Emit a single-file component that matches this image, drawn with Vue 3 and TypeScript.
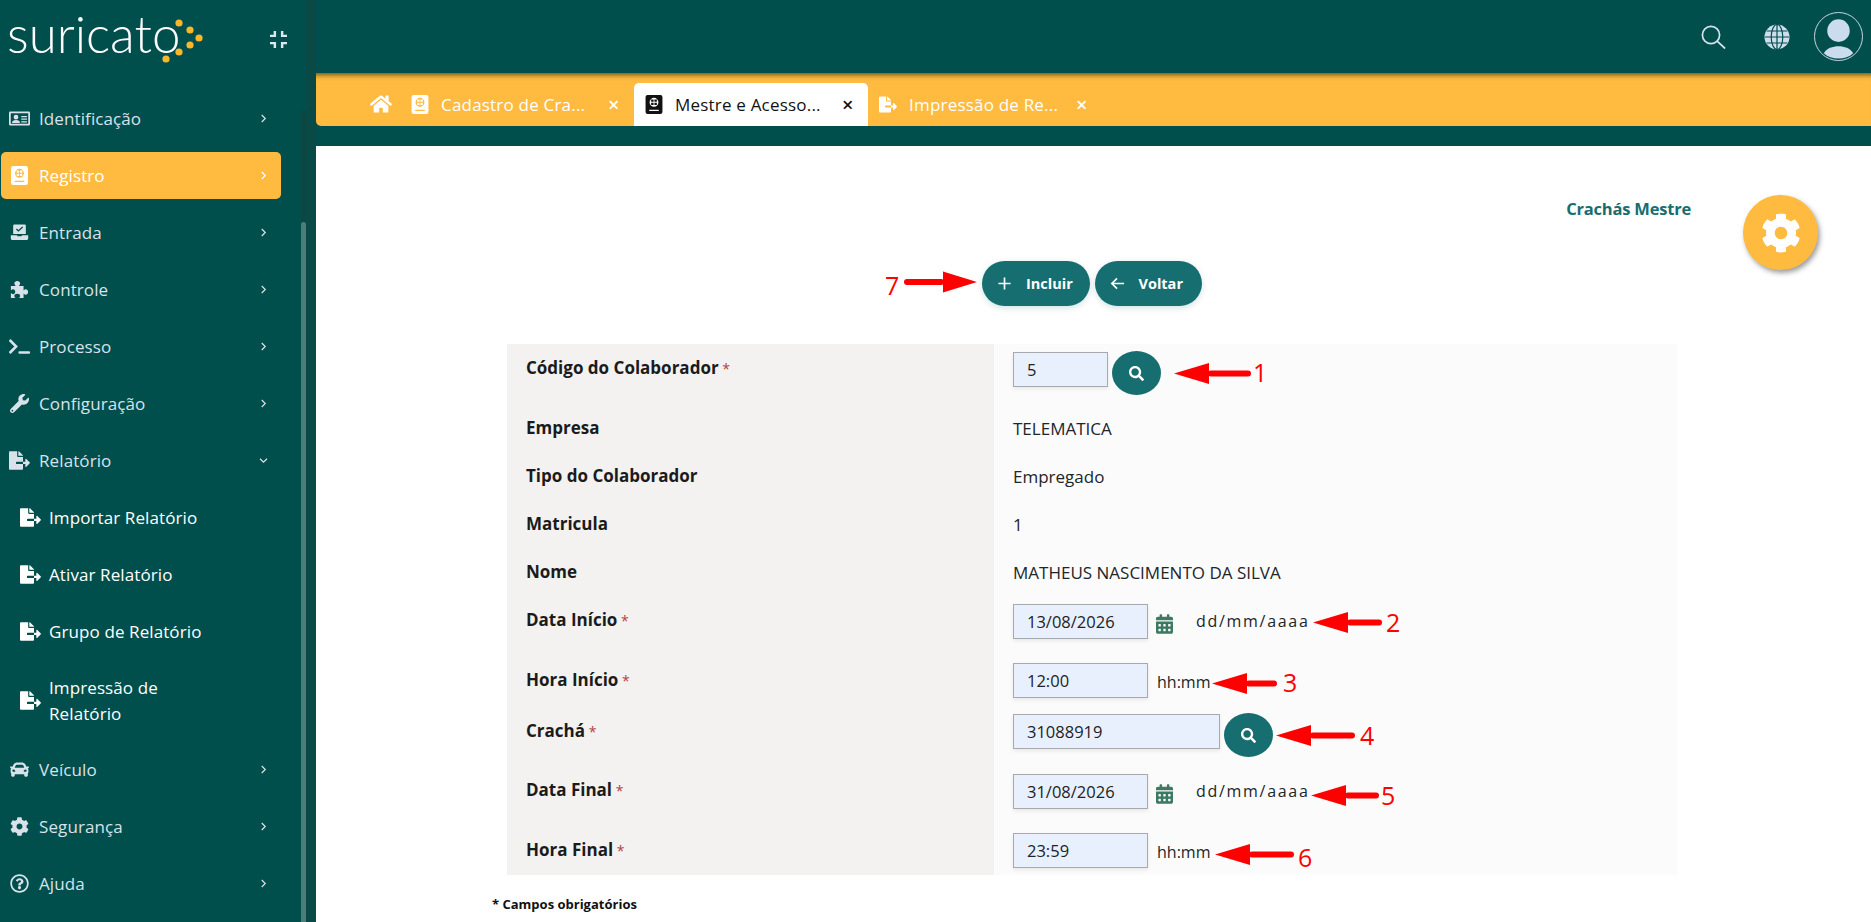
<template>
  <div class="app">
    <aside class="sidebar">
      <div class="brand">
        <div class="logo">
          <span class="logo-text">suricato</span>
          <svg class="logo-dots" viewBox="0 0 50 50" width="50" height="50">
            <circle v-for="(d, i) in logoDots" :key="i" :cx="d[0]" :cy="d[1]" r="3.6" fill="#fbb62c" />
          </svg>
        </div>
        <svg class="collapse" viewBox="5 5 14 14" width="17" height="17" fill="#dfe7ee">
          <path d="M5 16h3v3h2v-5H5v2zm3-8H5v2h5V5H8v3zm6 11h2v-3h3v-2h-5v5zm2-11V5h-2v5h5V8h-3z" />
        </svg>
      </div>
      <nav class="menu">
        <template v-for="item in menu" :key="item.label">
          <a class="menu-item" :class="{ active: item.active, sub: item.sub, tall: item.tall }">
            <span class="menu-icon">
              <svg :viewBox="icons[item.icon].box"><path fill-rule="evenodd" :d="icons[item.icon].d" /></svg>
            </span>
            <span class="menu-label">{{ item.label }}</span>
            <svg v-if="!item.sub" class="chev" :class="{ open: item.open }" viewBox="0 0 8 12" width="7" height="11">
              <path d="M2 2l4 4-4 4" fill="none" stroke="currentColor" stroke-width="1.4" />
            </svg>
          </a>
        </template>
      </nav>
      <div class="scroll-track"><div class="scroll-thumb"></div></div>
    </aside>

    <main class="main">
      <header class="topbar">
        <svg class="top-search" viewBox="0 0 26 26" width="26" height="26" fill="none" stroke="#d6e2ee" stroke-width="1.7">
          <circle cx="11" cy="11" r="8.6" />
          <path d="M17.4 17.4l7.2 6.6" stroke-linecap="round" />
        </svg>
        <svg class="top-globe" viewBox="0 0 26 26" width="26" height="26">
          <circle cx="13" cy="13" r="12.5" fill="#cfdeed" />
          <g fill="none" stroke="#004f4c" stroke-width="1.2">
            <ellipse cx="13" cy="13" rx="5.8" ry="12.5" />
            <path d="M13 .5v25M1 13h24M2.6 7h20.8M2.6 19h20.8" />
          </g>
        </svg>
        <div class="avatar">
          <svg viewBox="0 0 48 48" width="47" height="47">
            <circle cx="24" cy="18" r="11.5" fill="#cbdcee" />
            <path d="M9 41c3-5 9-7 15-7s12 2 15 7c-4 3.800-9 5.500-15 5.500S13 44.800 9 41z" fill="#cbdcee" />
          </svg>
        </div>
      </header>

      <div class="tabbar">
        <svg class="tab-home" :viewBox="icons.home.box" width="22" height="20"><path :d="icons.home.d" /></svg>
        <div v-for="t in tabs" :key="t.label" class="tab" :class="{ current: t.current }">
          <svg class="tab-icon" :viewBox="icons[t.icon].box"><path fill-rule="evenodd" :d="icons[t.icon].d" /></svg>
          <span class="tab-label">{{ t.label }}</span>
          <span class="tab-close">×</span>
        </div>
      </div>
      <div class="strip"></div>

      <section class="content">
        <div class="page-title">Crachás Mestre</div>
        <button class="fab" type="button">
          <svg :viewBox="icons.cog.box" width="40" height="40"><path :d="icons.cog.d" /></svg>
        </button>

        <div class="actions">
          <button class="pill" type="button">
            <svg viewBox="0 0 16 16" width="15" height="15" fill="none" stroke="#fff" stroke-width="1.8"><path d="M8 1.500v13M1.500 8h13" /></svg>
            Incluir
          </button>
          <button class="pill" type="button">
            <svg viewBox="0 0 16 16" width="15" height="15" fill="none" stroke="#fff" stroke-width="1.8"><path d="M15 8H2M7.500 2.500L2 8l5.500 5.500" /></svg>
            Voltar
          </button>
        </div>

        <div class="form">
          <template v-for="r in rows" :key="r.label">
            <div class="cell-label" :class="{ low: r.low }">{{ r.label }}<span v-if="r.req" class="req"> *</span></div>
            <div class="cell-value">
              <span v-if="r.text" class="value-text">{{ r.text }}</span>
              <template v-else>
                <input class="field" :class="r.size" :value="r.value" readonly />
                <button v-if="r.search" class="round" type="button">
                  <svg :viewBox="icons.search.box" width="15" height="15"><path :d="icons.search.d" /></svg>
                </button>
                <svg v-if="r.calendar" class="cal" :viewBox="icons.calendar.box" width="17" height="20"><path :d="icons.calendar.d" /></svg>
                <span v-if="r.calendar" class="hint-date">dd/mm/aaaa</span>
                <span v-if="r.time" class="hint-time">hh:mm</span>
              </template>
            </div>
          </template>
        </div>
        <div class="footnote">* Campos obrigatórios</div>
      </section>
    </main>

    <!-- setas de anotação por cima do print -->
    <svg class="notes" width="1871" height="922" viewBox="0 0 1871 922">
      <g v-for="n in notes" :key="n.label">
        <path :d="arrowPath(n)" fill="#ff0000" />
        <path :d="shaftPath(n)" stroke="#ff0000" stroke-width="6" stroke-linecap="round" fill="none" />
        <text :x="n.tx" :y="n.ty" class="note-num">{{ n.label }}</text>
      </g>
    </svg>
  </div>
</template>

<script setup lang="ts">
interface Note {
  label: string
  tip: number
  base: number
  end: number
  y: number
  tx: number
  ty: number
}

const logoDots = [[9, 9], [20, 16], [29, 24], [20, 31], [9, 38], [-4, 45]]

const fileExport = 'M384 121.9c0-6.3-2.5-12.4-7-16.9L279.1 7c-4.5-4.5-10.6-7-17-7H256v128h128zM571 308l-95.7-96.4c-10.1-10.1-27.4-3-27.4 11.3V288h-64v64h64v65.2c0 14.3 17.3 21.4 27.4 11.3L571 332c6.6-6.6 6.6-17.4 0-24zm-379 28v-32c0-8.8 7.2-16 16-16h176V160H248c-13.2 0-24-10.8-24-24V0H24C10.7 0 0 10.7 0 24v464c0 13.3 10.7 24 24 24h336c13.3 0 24-10.7 24-24V352H208c-8.8 0-16-7.2-16-16z'

const icons: Record<string, { box: string; d: string }> = {
  card: { box: '0 0 24 18', d: 'M1.500 1h21A1.500 1.500 0 0 1 24 2.500v13a1.500 1.500 0 0 1-1.500 1.500h-21A1.500 1.500 0 0 1 0 15.500v-13A1.500 1.500 0 0 1 1.500 1zM2 3v12h20V3zM8 4.800a2.700 2.700 0 1 1 0 5.400 2.700 2.700 0 0 1 0-5.400zM3.500 14c0-2 1.800-3.200 4.500-3.200s4.500 1.200 4.500 3.200zM14 6h6.500v1.500H14zM14 9h6.500v1.500H14zM14 12h6.500v1.500H14z' },
  passport: { box: '0 0 16 18', d: 'M2 0h12a2 2 0 0 1 2 2v14a2 2 0 0 1-2 2H2a2 2 0 0 1-2-2V2a2 2 0 0 1 2-2zM8 2.700a4.200 4.200 0 1 0 0 8.400 4.200 4.200 0 0 0 0-8.400zM5.300 4.300h2.300v2.200H5.300zM8.400 4.300h2.300v2.200H8.400zM5.300 7.300h2.300v2.200H5.300zM8.400 7.300h2.300v2.200H8.400zM3.500 14h9v1.100h-9z' },
  laptop: { box: '0 0 24 24', d: 'M5.500 2h13A1.500 1.500 0 0 1 20 3.500V14H4V3.500A1.500 1.500 0 0 1 5.500 2zM10.600 11.200l6-5.400-1.200-1.300-4.700 4.300-2-1.900-1.200 1.300zM1.500 15.500h7.300l.7 1.200h5l.7-1.200h7.300c.3 0 .5.200.5.500v3.500c0 1-1 2-2 2h-18c-1 0-2-1-2-2V16c0-.3.200-.5.500-.5z' },
  puzzle: { box: '0 0 21 21', d: 'M1 6.500h5.200c-.9-.9-1.400-1.700-1.400-2.800C4.800 2 6.200 1 8 1s3.200 1 3.200 2.700c0 1.100-.5 1.900-1.400 2.800H15v5c.9-.9 1.600-1.300 2.300-1.300 1.600 0 2.700 1.300 2.700 3s-1.100 3-2.700 3c-.7 0-1.400-.4-2.300-1.300V20H10c.8-.8 1.200-1.500 1.200-2.400 0-1.400-1.300-2.400-3.200-2.400s-3.200 1-3.200 2.400c0 .9.4 1.600 1.200 2.400H1v-5.500c.8.8 1.500 1.200 2.300 1.200 1.500 0 2.500-1.200 2.500-2.700s-1-2.700-2.500-2.700c-.8 0-1.500.4-2.300 1.200z' },
  terminal: { box: '0 0 640 512', d: 'M257.981 272.971L63.638 467.314c-9.373 9.373-24.569 9.373-33.941 0L7.029 444.647c-9.357-9.357-9.375-24.522-.04-33.901L161.011 256 6.99 101.255c-9.335-9.379-9.317-24.544.04-33.901l22.667-22.667c9.373-9.373 24.569-9.373 33.941 0L257.981 239.03c9.373 9.372 9.373 24.568 0 33.941zM640 456v-32c0-13.255-10.745-24-24-24H312c-13.255 0-24 10.745-24 24v32c0 13.255 10.745 24 24 24h304c13.255 0 24-10.745 24-24z' },
  wrench: { box: '0 0 512 512', d: 'M507.73 109.1c-2.24-9.03-13.54-12.09-20.12-5.51l-74.36 74.36-67.88-11.31-11.31-67.88 74.36-74.36c6.62-6.62 3.43-17.9-5.66-20.16-47.38-11.74-99.55.91-136.58 37.93-39.64 39.64-50.55 97.1-34.05 147.2L18.74 402.76c-24.99 24.99-24.99 65.51 0 90.5 24.99 24.99 65.51 24.99 90.5 0l213.21-213.21c50.12 16.71 107.47 5.68 147.37-34.22 37.07-37.07 49.7-89.32 37.91-136.73zM64 472c-13.25 0-24-10.75-24-24 0-13.26 10.75-24 24-24s24 10.74 24 24c0 13.25-10.75 24-24 24z' },
  file: { box: '0 0 576 512', d: fileExport },
  car: { box: '0 0 512 512', d: 'M499.99 176h-59.87l-16.64-41.6C406.38 91.63 365.57 64 319.5 64h-127c-46.06 0-86.88 27.63-103.99 70.4L71.87 176H12.01C4.2 176-1.53 183.34.37 190.91l6 24C7.7 220.25 12.5 224 18.01 224h20.07C24.65 235.73 16 252.78 16 272v48c0 16.12 6.16 30.67 16 41.93V416c0 17.67 14.33 32 32 32h32c17.67 0 32-14.33 32-32v-32h256v32c0 17.67 14.33 32 32 32h32c17.67 0 32-14.33 32-32v-54.07c9.84-11.25 16-25.8 16-41.93v-48c0-19.22-8.65-36.27-22.07-48H494c5.51 0 10.31-3.75 11.64-9.09l6-24c1.89-7.57-3.84-14.91-11.65-14.91zm-352.06-17.83c7.29-18.22 24.94-30.17 44.57-30.17h127c19.63 0 37.28 11.95 44.57 30.17L384 208H128l19.93-49.83zM96 319.8c-19.2 0-32-12.76-32-31.9S76.8 256 96 256s48 28.71 48 47.85-28.8 15.95-48 15.95zm320 0c-19.2 0-48 3.19-48-15.95S396.8 256 416 256s32 12.76 32 31.9-12.8 31.9-32 31.9z' },
  cog: { box: '0 0 512 512', d: 'M487.4 315.7l-42.6-24.6c4.3-23.2 4.3-47 0-70.2l42.6-24.6c4.9-2.8 7.1-8.6 5.5-14-11.1-35.6-30-67.8-54.7-94.6-3.8-4.1-10-5.1-14.8-2.3L380.8 110c-17.9-15.4-38.5-27.3-60.8-35.1V25.8c0-5.6-3.9-10.5-9.4-11.7-36.7-8.2-74.3-7.8-109.2 0-5.5 1.2-9.4 6.1-9.4 11.7V75c-22.2 7.9-42.8 19.8-60.8 35.1L88.7 85.5c-4.9-2.8-11-1.9-14.8 2.3-24.7 26.7-43.6 58.9-54.7 94.6-1.7 5.4.6 11.2 5.5 14L67.3 221c-4.3 23.2-4.3 47 0 70.2l-42.6 24.6c-4.9 2.8-7.1 8.6-5.5 14 11.1 35.6 30 67.8 54.7 94.6 3.8 4.1 10 5.1 14.8 2.3l42.6-24.6c17.9 15.4 38.5 27.3 60.8 35.1v49.2c0 5.6 3.9 10.5 9.4 11.7 36.7 8.2 74.3 7.8 109.2 0 5.5-1.2 9.4-6.1 9.4-11.7v-49.2c22.2-7.9 42.8-19.8 60.8-35.1l42.6 24.6c4.9 2.8 11 1.9 14.8-2.3 24.7-26.7 43.6-58.9 54.7-94.6 1.5-5.5-.7-11.3-5.6-14.1zM256 336c-44.1 0-80-35.9-80-80s35.9-80 80-80 80 35.9 80 80-35.9 80-80 80z' },
  help: { box: '0 0 512 512', d: 'M256 8C119.043 8 8 119.083 8 256c0 136.997 111.043 248 248 248s248-111.003 248-248C504 119.083 392.957 8 256 8zm0 448c-110.532 0-200-89.431-200-200 0-110.495 89.472-200 200-200 110.491 0 200 89.471 200 200 0 110.53-89.431 200-200 200zm107.244-255.2c0 67.052-72.421 68.084-72.421 92.863V300c0 6.627-5.373 12-12 12h-45.647c-6.627 0-12-5.373-12-12v-8.659c0-35.745 27.1-50.034 47.579-61.516 17.561-9.845 28.324-16.541 28.324-29.579 0-17.246-21.999-28.693-39.784-28.693-23.189 0-33.894 10.977-48.942 29.969-4.057 5.12-11.46 6.071-16.666 2.124l-27.824-21.098c-5.107-3.872-6.251-11.066-2.644-16.363C184.846 131.491 214.94 112 261.794 112c49.071 0 101.45 38.304 101.45 88.8zM298 368c0 23.159-18.841 42-42 42s-42-18.841-42-42 18.841-42 42-42 42 18.841 42 42z' },
  home: { box: '0 0 576 512', d: 'M280.37 148.26L96 300.11V464a16 16 0 0 0 16 16l112.06-.29a16 16 0 0 0 15.92-16V368a16 16 0 0 1 16-16h64a16 16 0 0 1 16 16v95.64a16 16 0 0 0 16 16.05L464 480a16 16 0 0 0 16-16V300L295.67 148.26a12.19 12.19 0 0 0-15.3 0zM571.6 251.47L488 182.56V44.05a12 12 0 0 0-12-12h-56a12 12 0 0 0-12 12v72.61L318.47 43a48 48 0 0 0-61 0L4.34 251.47a12 12 0 0 0-1.6 16.9l25.5 31A12 12 0 0 0 45.15 301l235.22-193.74a12.19 12.19 0 0 1 15.3 0L530.9 301a12 12 0 0 0 16.9-1.6l25.5-31a12 12 0 0 0-1.7-16.93z' },
  search: { box: '0 0 512 512', d: 'M505 442.7L405.3 343c-4.5-4.5-10.6-7-17-7H372c27.6-35.3 44-79.7 44-128C416 93.1 322.9 0 208 0S0 93.1 0 208s93.1 208 208 208c48.3 0 92.7-16.4 128-44v16.3c0 6.4 2.5 12.5 7 17l99.7 99.7c9.4 9.4 24.6 9.4 33.9 0l28.3-28.3c9.4-9.4 9.4-24.6.1-34zM208 336c-70.7 0-128-57.2-128-128 0-70.7 57.2-128 128-128 70.7 0 128 57.2 128 128 0 70.7-57.2 128-128 128z' },
  calendar: { box: '0 0 448 512', d: 'M0 464c0 26.5 21.5 48 48 48h352c26.5 0 48-21.5 48-48V192H0v272zm320-196c0-6.6 5.4-12 12-12h40c6.6 0 12 5.4 12 12v40c0 6.6-5.4 12-12 12h-40c-6.6 0-12-5.4-12-12v-40zm0 128c0-6.6 5.4-12 12-12h40c6.6 0 12 5.4 12 12v40c0 6.6-5.4 12-12 12h-40c-6.6 0-12-5.4-12-12v-40zM192 268c0-6.6 5.4-12 12-12h40c6.6 0 12 5.4 12 12v40c0 6.6-5.4 12-12 12h-40c-6.6 0-12-5.4-12-12v-40zm0 128c0-6.6 5.4-12 12-12h40c6.6 0 12 5.4 12 12v40c0 6.6-5.4 12-12 12h-40c-6.6 0-12-5.4-12-12v-40zM64 268c0-6.6 5.4-12 12-12h40c6.6 0 12 5.4 12 12v40c0 6.6-5.4 12-12 12H76c-6.6 0-12-5.4-12-12v-40zm0 128c0-6.6 5.4-12 12-12h40c6.6 0 12 5.4 12 12v40c0 6.6-5.4 12-12 12H76c-6.6 0-12-5.4-12-12v-40zM400 64h-48V16c0-8.8-7.2-16-16-16h-32c-8.8 0-16 7.2-16 16v48H160V16c0-8.8-7.2-16-16-16h-32c-8.8 0-16 7.2-16 16v48H48C21.5 64 0 85.5 0 112v48h448v-48c0-26.5-21.5-48-48-48z' }
}

const menu = [
  { label: 'Identificação', icon: 'card' },
  { label: 'Registro', icon: 'passport', active: true },
  { label: 'Entrada', icon: 'laptop' },
  { label: 'Controle', icon: 'puzzle' },
  { label: 'Processo', icon: 'terminal' },
  { label: 'Configuração', icon: 'wrench' },
  { label: 'Relatório', icon: 'file', open: true },
  { label: 'Importar Relatório', icon: 'file', sub: true },
  { label: 'Ativar Relatório', icon: 'file', sub: true },
  { label: 'Grupo de Relatório', icon: 'file', sub: true },
  { label: 'Impressão de Relatório', icon: 'file', sub: true, tall: true },
  { label: 'Veículo', icon: 'car' },
  { label: 'Segurança', icon: 'cog' },
  { label: 'Ajuda', icon: 'help' }
]

const tabs = [
  { label: 'Cadastro de Cra...', icon: 'passport' },
  { label: 'Mestre e Acesso...', icon: 'passport', current: true },
  { label: 'Impressão de Re...', icon: 'file' }
]

const rows = [
  { label: 'Código do Colaborador', req: true, value: '5', size: 'small', search: true },
  { label: 'Empresa', text: 'TELEMATICA' },
  { label: 'Tipo do Colaborador', text: 'Empregado' },
  { label: 'Matricula', text: '1' },
  { label: 'Nome', text: 'MATHEUS NASCIMENTO DA SILVA' },
  { label: 'Data Início', req: true, value: '13/08/2026', size: 'medium', calendar: true },
  { label: 'Hora Início', req: true, value: '12:00', size: 'medium', time: true, low: true },
  { label: 'Crachá', req: true, value: '31088919', size: 'large', search: true, low: true },
  { label: 'Data Final', req: true, value: '31/08/2026', size: 'medium', calendar: true },
  { label: 'Hora Final', req: true, value: '23:59', size: 'medium', time: true, low: true }
]

const notes: Note[] = [
  { label: '7', tip: 977, base: 943, end: 907, y: 282, tx: 885, ty: 295 },
  { label: '1', tip: 1174, base: 1209, end: 1248, y: 373.5, tx: 1253, ty: 382 },
  { label: '2', tip: 1313, base: 1348, end: 1379, y: 622.5, tx: 1386, ty: 632 },
  { label: '3', tip: 1212, base: 1247, end: 1274, y: 683.5, tx: 1283, ty: 692 },
  { label: '4', tip: 1276, base: 1311, end: 1352, y: 735.5, tx: 1360, ty: 745 },
  { label: '5', tip: 1311, base: 1346, end: 1376, y: 795.5, tx: 1381, ty: 805 },
  { label: '6', tip: 1215, base: 1250, end: 1291, y: 854.5, tx: 1298, ty: 867 }
]

const arrowPath = (n: Note) => `M${n.tip} ${n.y}L${n.base} ${n.y - 10.5}V${n.y + 10.5}Z`
const shaftPath = (n: Note) => {
  const dir = n.tip < n.end ? -1 : 1
  return `M${n.base - dir * 2} ${n.y}H${n.end}`
}
</script>

<style scoped>
.app {
  position: relative;
  display: flex;
  width: 1871px;
  height: 922px;
  overflow: hidden;
  font-family: "Open Sans", "Noto Sans", sans-serif;
  color: #212529;
}

.sidebar {
  position: relative;
  flex: 0 0 306px;
  background: #004f4c;
  color: #d9e2ea;
}

.brand {
  display: flex;
  align-items: flex-start;
  height: 95px;
}

.logo {
  position: relative;
  width: 263px;
  padding: 3px 0 0 7px;
}

.logo-text {
  font-family: "Lato", sans-serif;
  font-weight: 300;
  font-size: 51px;
  line-height: 62px;
  color: #fff;
}

.logo-dots {
  position: absolute;
  left: 170px;
  top: 14px;
  overflow: visible;
}

.collapse {
  margin-top: 31px;
}

.menu {
  display: flex;
  flex-direction: column;
  gap: 10px;
  padding-left: 1px;
  width: 280px;
}

.menu-item {
  display: flex;
  align-items: center;
  height: 47px;
  padding: 0 14px 0 8px;
  border-radius: 5px;
  font-size: 17px;
  letter-spacing: 0.1px;
}

.menu-item.active {
  background: #ffbb3f;
  color: #fff;
}

.menu-item.sub {
  padding-left: 19px;
  color: #fff;
}

.menu-item.tall {
  height: 71px;
  line-height: 26px;
}

.menu-icon {
  flex: 0 0 30px;
  display: flex;
  align-items: center;
}

.sub .menu-icon {
  flex-basis: 29px;
}

.menu-icon svg {
  width: 21px;
  height: 19px;
  fill: currentColor;
}

.menu-label {
  flex: 1;
}

.tall .menu-label {
  flex: 0 0 140px;
}

.chev.open {
  transform: rotate(90deg);
}

.scroll-track {
  position: absolute;
  right: 0;
  top: 110px;
  bottom: 0;
  width: 5px;
  background: #0c4743;
}

.scroll-thumb {
  margin-top: 112px;
  height: 700px;
  background: #4c7d79;
  border-radius: 3px 3px 0 0;
}

.main {
  flex: 1;
  display: flex;
  flex-direction: column;
  min-width: 0;
  background: #004f4c;
  border-left: 10px solid #0a4a46;
}

.topbar {
  display: flex;
  align-items: center;
  justify-content: flex-end;
  height: 73px;
  padding-right: 8px;
  flex: none;
}

.top-search {
  margin-right: 38px;
}

.top-globe {
  margin-right: 24px;
}

.avatar {
  width: 49px;
  height: 49px;
  border: 1.5px solid #c6d6e4;
  border-radius: 50%;
  overflow: hidden;
  box-sizing: border-box;
}

.avatar svg {
  display: block;
}

.tabbar {
  display: flex;
  align-items: flex-end;
  height: 53px;
  flex: none;
  padding-left: 54px;
  background: #ffbb3f;
  border-radius: 0 0 0 5px;
  box-shadow: inset 0 7px 5px -5px rgba(60, 50, 10, 0.75);
  color: #fff;
}

.tab-home {
  fill: #fff;
  margin: 0 19px 12px 0;
}

.tab {
  display: flex;
  align-items: center;
  height: 43px;
  font-size: 17px;
  letter-spacing: 0.2px;
  border-radius: 5px 5px 0 0;
  padding: 0 16px 0 0;
}

.tab.current {
  background: #fff;
  color: #111;
  padding-left: 11px;
  margin-right: 11px;
}

.tab-icon {
  width: 18px;
  height: 19px;
  fill: currentColor;
  margin-right: 12px;
}

.tab-label {
  width: 167px;
  white-space: nowrap;
}

.tab-close {
  width: 10px;
  text-align: center;
  font-size: 20px;
  line-height: 1;
  font-weight: 600;
}

.strip {
  height: 20px;
  flex: none;
}

.content {
  position: relative;
  flex: 1;
  display: flex;
  flex-direction: column;
  background: #fff;
}

.page-title {
  margin-top: 51px;
  padding-right: 180px;
  text-align: right;
  line-height: 24px;
  font-size: 16.5px;
  font-weight: 700;
  letter-spacing: -0.2px;
  color: #176e70;
}

.fab {
  position: absolute;
  top: 49px;
  right: 53px;
  width: 75px;
  height: 75px;
  border: 0;
  border-radius: 50%;
  background: #ffbb3f;
  box-shadow: 2px 3px 5px rgba(60, 60, 60, 0.5);
  display: flex;
  align-items: center;
  justify-content: center;
}

.fab svg {
  fill: #fff;
}

.actions {
  display: flex;
  justify-content: center;
  gap: 5px;
  margin-top: 40px;
  padding-right: 3px;
}

.pill {
  display: flex;
  align-items: center;
  gap: 14px;
  width: 107.5px;
  height: 45px;
  padding: 0 0 0 15px;
  border: 0;
  border-radius: 23px;
  background: #176e70;
  color: #fff;
  font-family: inherit;
  font-size: 14.5px;
  font-weight: 700;
  box-shadow: 0 2px 6px rgba(23, 110, 112, 0.2);
}

.form {
  display: grid;
  grid-template-columns: 487px 683px;
  grid-template-rows: 60px 48px 48px 48px 48px 59px 51px 60px 59px 50px;
  margin: 38px 0 0 191px;
  width: 1170px;
  font-size: 17px;
}

.cell-label {
  background: #f3f2f1;
  padding: 13px 0 0 19px;
  line-height: 22px;
  font-weight: 700;
  color: #1b1b1b;
}

.cell-label.low {
  padding-top: 14px;
}

.req {
  color: #b3413f;
  font-weight: 400;
  font-size: 14px;
}

.cell-value {
  display: flex;
  align-items: flex-start;
  background: #fbfbfb;
  padding: 8px 0 0 19px;
}

.value-text {
  margin-top: 6px;
  line-height: 22px;
}

.field {
  box-sizing: border-box;
  height: 35px;
  border: 1px solid #a9a9ad;
  background: #e8f0fe;
  padding: 0 13px;
  font-family: inherit;
  font-size: 16.5px;
  color: #222;
  outline: 0;
  box-shadow: 0 2px 4px rgba(0, 0, 0, 0.08);
}

.field.small {
  width: 95px;
}

.field.medium {
  width: 135px;
}

.field.large {
  width: 207px;
}

.round {
  width: 49px;
  height: 44px;
  margin: -1px 0 0 4px;
  border: 0;
  border-radius: 50%;
  background: #176e70;
  display: flex;
  align-items: center;
  justify-content: center;
}

.round svg {
  fill: #fff;
}

.cal {
  margin: 10px 0 0 8px;
  fill: #3c7a63;
}

.hint-date {
  margin: 5px 0 0 23px;
  line-height: 25px;
  font-size: 16px;
  letter-spacing: 1.7px;
}

.hint-time {
  margin: 7px 0 0 9px;
  line-height: 25px;
  font-size: 16px;
}

.footnote {
  margin: 20px 0 0 176px;
  font-size: 13px;
  font-weight: 700;
  color: #111;
}

.notes {
  position: absolute;
  left: 0;
  top: 0;
  pointer-events: none;
}

.note-num {
  font-family: "Open Sans", sans-serif;
  font-size: 25px;
  fill: #ff0000;
}
</style>
